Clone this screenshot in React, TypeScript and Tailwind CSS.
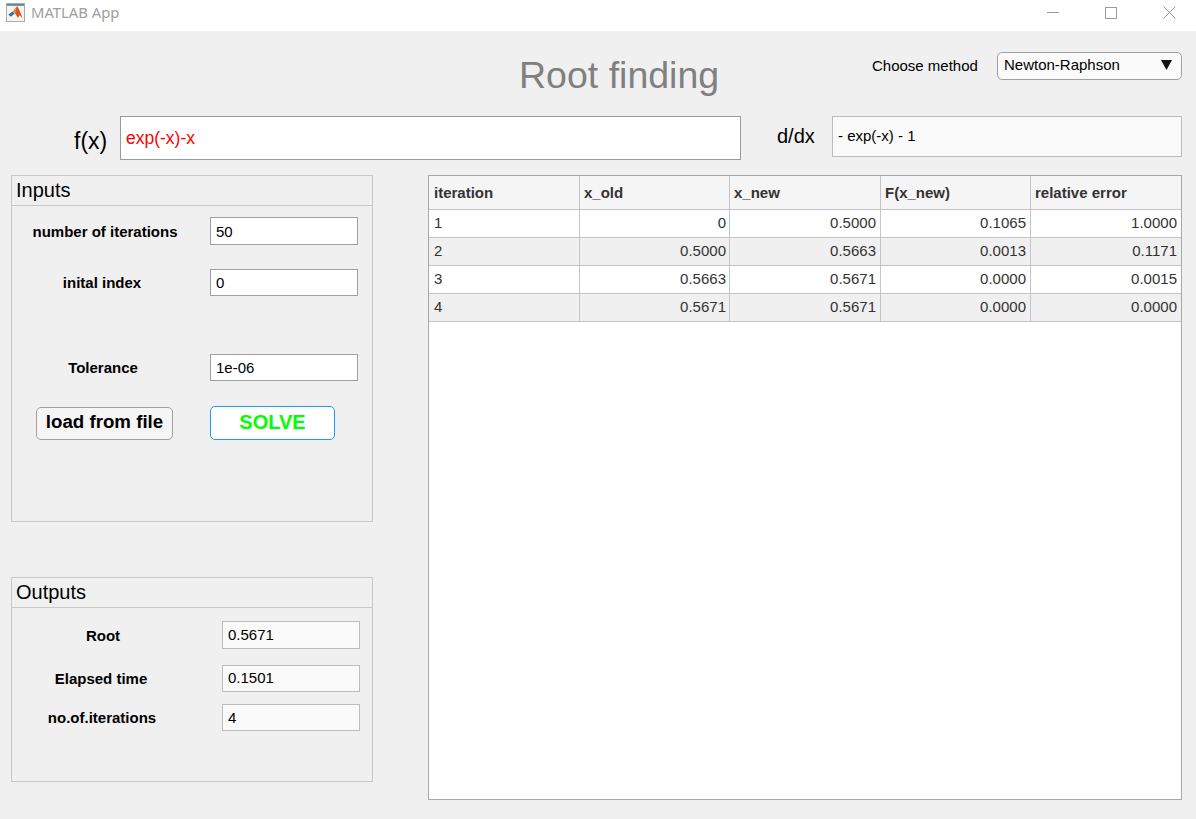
import React from "react";

const font = "font-['Liberation_Sans',Arial,sans-serif]";

const rows = [
  ["1", "0", "0.5000", "0.1065", "1.0000"],
  ["2", "0.5000", "0.5663", "0.0013", "0.1171"],
  ["3", "0.5663", "0.5671", "0.0000", "0.0015"],
  ["4", "0.5671", "0.5671", "0.0000", "0.0000"],
];
const headers = ["iteration", "x_old", "x_new", "F(x_new)", "relative error"];
const cols = "grid grid-cols-[151px_150px_151px_150px_150px]";

function MatlabIcon() {
  return (
    <svg width="19" height="19" viewBox="0 0 20 20" className="shrink-0">
      <rect x="0.5" y="0.5" width="19" height="19" fill="#f4f4f4" stroke="#a8a8a8" />
      <rect x="1" y="1" width="18" height="2" fill="#5f87a8" />
      <path d="M2.5 12 L7 9 L9 11 L7 13 L5 14.5 Z" fill="#2f6fb5" />
      <path d="M7 9 L11.5 3.5 L13 5 L9 11 Z" fill="#e8902a" />
      <path d="M11.5 3.5 L13.5 6 L17.5 16 L14.5 13 L12.5 15.5 L9.5 11 Z" fill="#d9541e" />
    </svg>
  );
}

function InputRow({ label, value, labelClass, fieldClass, className }: { label: string; value: string; labelClass: string; fieldClass: string; className: string }) {
  return (
    <div className={`flex items-center ${className}`}>
      <div className={`${labelClass} shrink-0 pt-[2px] text-center text-[15px] font-bold text-black`}>{label}</div>
      <div className={fieldClass}>{value}</div>
    </div>
  );
}

const editField = "flex w-[148px] items-center border border-[#a0a0a0] bg-white pl-[5px] pt-[2px] text-[15px] text-black";
const outField = "flex w-[138px] items-center border border-[#bdbdbd] bg-[#fafafa] pl-[5px] text-[15px] text-black";

function Panel({ title, className, children }: { title: string; className: string; children: React.ReactNode }) {
  return (
    <section className={`w-[362px] border border-[#c8c8c8] ${className}`}>
      <h2 className="h-[30px] border-b border-[#c8c8c8] pl-[4px] text-[20px] leading-[28px] text-black">{title}</h2>
      {children}
    </section>
  );
}

export default function App() {
  return (
    <div className={`${font} h-[819px] w-[1196px] overflow-hidden bg-[#f0f0f0]`}>
      {/* window title bar */}
      <div className="flex h-[31px] items-center bg-white pb-[6px] pl-[6px]">
        <MatlabIcon />
        <span className="ml-[6px] font-['Noto_Sans',sans-serif] text-[14.8px] text-[#a0a0a0]">MATLAB App</span>
        <div className="ml-auto flex items-center">
          <svg width="12" height="12" viewBox="0 0 12 12" className="mr-[46px]"><path d="M0 5.5H12" stroke="#9a9a9a" /></svg>
          <svg width="12" height="12" viewBox="0 0 12 12" className="mr-[46px]"><rect x="0.5" y="0.5" width="11" height="11" fill="none" stroke="#9a9a9a" /></svg>
          <svg width="13" height="13" viewBox="0 0 13 13" className="mr-[20px]"><path d="M0.5 0.5L12.5 12.5M12.5 0.5L0.5 12.5" stroke="#9a9a9a" /></svg>
        </div>
      </div>

      {/* heading row */}
      <div className="flex h-[85px] items-start">
        <h1 className="ml-[519px] mt-[21px] w-[353px] text-[37.5px] leading-[46px] text-[#808080]">Root finding</h1>
        <span className="mt-[26px] w-[125px] text-[15px] leading-[17px] text-black">Choose method</span>
        <div className="mt-[21px] flex h-[28px] w-[185px] items-center justify-between rounded-[5px] border border-[#a0a0a0] bg-[#fafafa] pl-[6px] pr-[9px] text-[15px] text-black">
          <span className="-mt-[2px]">Newton-Raphson</span>
          <svg width="11" height="10" viewBox="0 0 11 10" className="-mt-[3px]"><path d="M0 0H11L5.5 10Z" fill="#111" /></svg>
        </div>
      </div>

      {/* function row */}
      <div className="flex h-[59px] items-start">
        <span className="ml-[74px] mt-[12px] w-[46px] text-[23px] leading-[26px] text-black">f(x)</span>
        <div className="flex h-[44px] w-[621px] items-center border border-[#9a9a9a] bg-white pl-[5px] text-[17.5px] text-[#ff0000]">exp(-x)-x</div>
        <span className="ml-[36px] mt-[8px] w-[55px] text-[20px] leading-[25px] text-black">d/dx</span>
        <div className="flex h-[41px] w-[350px] items-center border border-[#bdbdbd] bg-[#fafafa] pl-[5px] text-[15px] text-black">- exp(-x) - 1</div>
      </div>

      {/* main content */}
      <div className="flex items-start pl-[11px]">
        <div className="flex w-[417px] flex-col">
          <Panel title="Inputs" className="h-[347px]">
            <InputRow label="number of iterations" value="50" labelClass="w-[186px]" fieldClass={`${editField} ml-[12px] h-[28px]`} className="mt-[11px]" />
            <InputRow label="inital index" value="0" labelClass="w-[180px]" fieldClass={`${editField} ml-[18px] h-[27px]`} className="mt-[24px]" />
            <InputRow label="Tolerance" value="1e-06" labelClass="w-[182px]" fieldClass={`${editField} ml-[16px] h-[27px]`} className="mt-[58px]" />
            <div className="ml-[24px] mt-[26px] flex items-start">
              <button className="h-[33px] w-[137px] rounded-[5px] border border-[#a0a0a0] bg-[#f5f5f5] pb-[2px] text-[18.7px] font-bold leading-none text-black">load from file</button>
              <button className="ml-[37px] -mt-[1px] h-[34px] w-[125px] rounded-[5px] border border-[#1e9bf0] bg-white pb-[2px] text-[20px] font-bold leading-none text-[#00ff00]">SOLVE</button>
            </div>
          </Panel>
          <Panel title="Outputs" className="mt-[55px] h-[205px]">
            <InputRow label="Root" value="0.5671" labelClass="w-[182px]" fieldClass={`${outField} ml-[28px] h-[28px]`} className="mt-[13px]" />
            <InputRow label="Elapsed time" value="0.1501" labelClass="w-[178px]" fieldClass={`${outField} ml-[32px] h-[27px]`} className="mt-[16px]" />
            <InputRow label="no.of.iterations" value="4" labelClass="w-[180px]" fieldClass={`${outField} ml-[30px] h-[27px] pt-[2px]`} className="mt-[12px]" />
          </Panel>
        </div>

        {/* results table */}
        <div className="h-[625px] w-[754px] border border-[#a8a8a8] bg-white text-[15px] text-[#333]">
          <div className={`${cols} h-[34px] border-b border-[#c4c4c4] bg-[#f5f5f5] font-bold`}>
            {headers.map((h, i) => (
              <div key={h} className={`flex items-center pt-[2px] ${i === 0 ? "pl-[5px]" : "pl-[4px]"} ${i < 4 ? "border-r border-[#c4c4c4]" : ""}`}>{h}</div>
            ))}
          </div>
          {rows.map((row, r) => (
            <div key={row[0]} className={`${cols} h-[28px] border-b border-[#c4c4c4] ${r % 2 ? "bg-[#f0f0f0]" : "bg-white"}`}>
              {row.map((c, i) => (
                <div key={i} className={`flex items-center ${i === 0 ? "pl-[5px]" : i === 1 ? "justify-end pr-[3px]" : "justify-end pr-[4px]"} ${i < 4 ? "border-r border-[#c4c4c4]" : ""}`}>{c}</div>
              ))}
            </div>
          ))}
        </div>
      </div>
    </div>
  );
}
